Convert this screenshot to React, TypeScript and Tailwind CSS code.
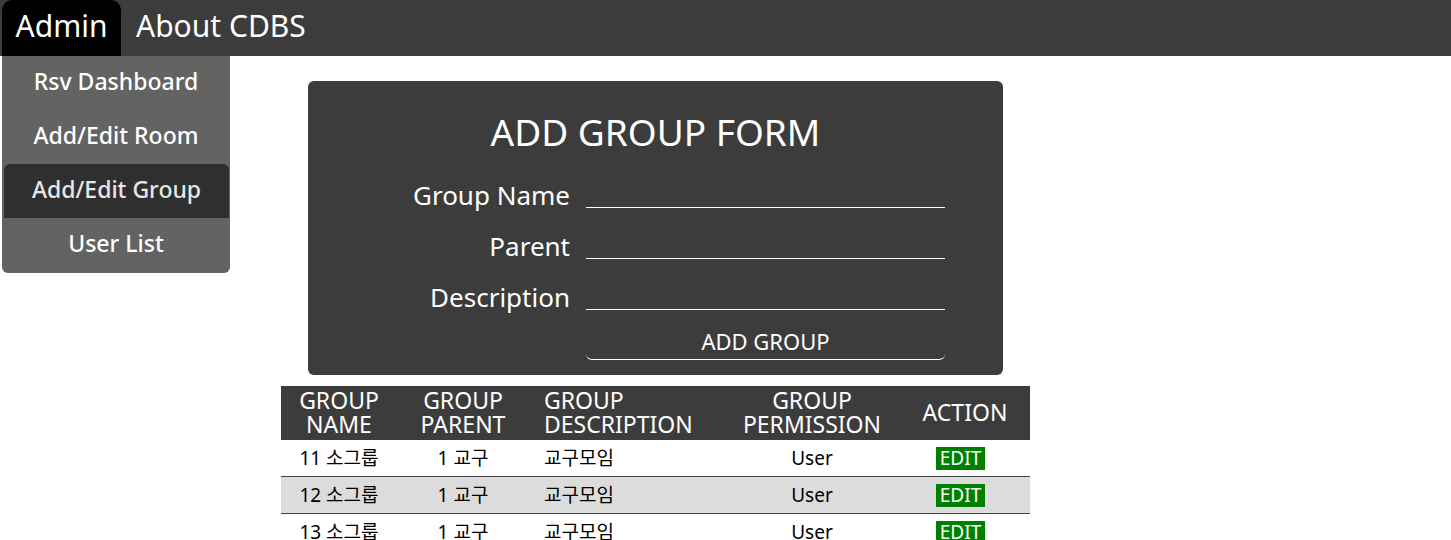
import React from "react";

const rows = [
  { name: "11 소그룹", parent: "1 교구", desc: "교구모임", perm: "User", bg: "bg-white" },
  { name: "12 소그룹", parent: "1 교구", desc: "교구모임", perm: "User", bg: "bg-[#dcdcdc]" },
  { name: "13 소그룹", parent: "1 교구", desc: "교구모임", perm: "User", bg: "bg-white" },
];

export default function App() {
  const font = { fontFamily: '"Noto Sans", "Noto Sans CJK KR", sans-serif' };
  return (
    <div className="w-[1451px] h-[540px] bg-white overflow-hidden" style={font}>
      <nav className="h-[56px] bg-[#3c3c3c] flex items-stretch pl-[2px]">
        <div className="bg-black text-white text-[30px] w-[119px] rounded-t-[10px] flex items-center justify-center pb-[6px]">Admin</div>
        <div className="text-white text-[30px] flex items-center pl-[15px] pb-[6px]">About CDBS</div>
      </nav>
      <div className="flex">
        <div className="w-[230px] pl-[2px] shrink-0">
          <div className="bg-[#636363] rounded-b-[6px] flex flex-col pb-[1px]">
            <div className="h-[54px] flex items-center justify-center text-white text-[23px] font-medium pb-[4px]">Rsv Dashboard</div>
            <div className="h-[54px] flex items-center justify-center text-white text-[23px] font-medium pb-[4px]">Add/Edit Room</div>
            <div className="h-[54px] ml-[2px] mr-[1px] rounded-t-[6px] bg-[#2f2f2f] flex items-center justify-center text-[#e6e6e6] text-[23px] font-medium pb-[4px]">Add/Edit Group</div>
            <div className="h-[54px] flex items-center justify-center text-white text-[23px] font-medium pb-[4px]">User List</div>
          </div>
        </div>
        <div className="pl-[51px] pt-[25px]">
          <div className="ml-[27px] w-[695px] h-[294px] bg-[#3c3c3c] rounded-[6px] flex flex-col items-center pt-[25px]">
            <h1 className="text-white text-[37px] leading-[52px]">ADD GROUP FORM</h1>
            <div className="mt-[10px] grid grid-cols-[262px_359px] gap-x-[16px] gap-y-[11px] w-full">
              {["Group Name", "Parent", "Description"].map((l) => (
                <React.Fragment key={l}>
                  <div className="text-white text-[26px] text-right h-[40px] leading-[36px] pt-[9px] whitespace-nowrap">{l}</div>
                  <div className="h-[40px] border-b border-white" />
                </React.Fragment>
              ))}
              <div />
              <div className="h-[34px] border-b border-white rounded-b-[6px] text-white text-[22px] flex items-center justify-center mt-[5px] pb-[2px]">ADD GROUP</div>
            </div>
          </div>
          <div className="mt-[11px] w-[749px]">
            <div className="grid grid-cols-[116px_132px_195px_176px_130px] bg-[#3c3c3c] h-[54px] text-white text-[23px] leading-[24px] items-center pb-[2px]">
              <div className="text-center">GROUP<br />NAME</div>
              <div className="text-center">GROUP<br />PARENT</div>
              <div className="pl-[15px] whitespace-nowrap">GROUP<br />DESCRIPTION</div>
              <div className="text-center">GROUP<br />PERMISSION</div>
              <div className="text-center">ACTION</div>
            </div>
            {rows.map((r, i) => (
              <div key={i} className={`grid grid-cols-[116px_132px_195px_176px_130px] h-[37px] items-center text-[19px] text-black ${r.bg} ${i < 2 ? "border-b border-[#444]" : ""}`}>
                <div className="text-center">{r.name}</div>
                <div className="text-center">{r.parent}</div>
                <div className="pl-[15px]">{r.desc}</div>
                <div className="text-center">{r.perm}</div>
                <div className="flex justify-center pr-[9px]">
                  <span className="bg-[#008000] text-white text-[19px] leading-[23px] px-[4px]">EDIT</span>
                </div>
              </div>
            ))}
          </div>
        </div>
      </div>
    </div>
  );
}
